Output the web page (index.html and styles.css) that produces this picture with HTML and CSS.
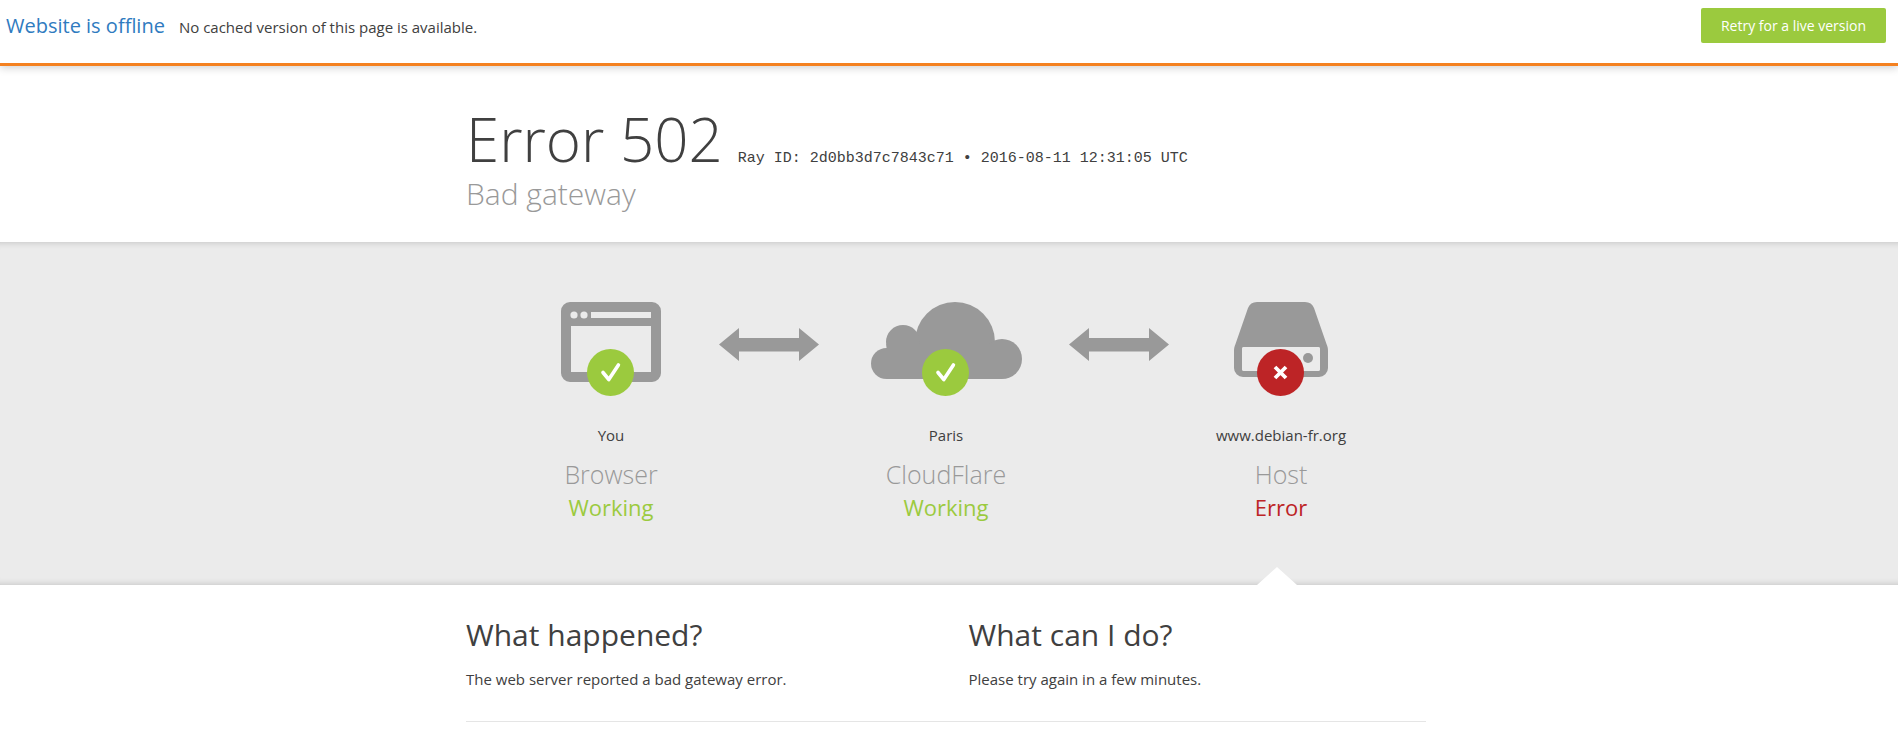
FILE: index.html
```html
<!DOCTYPE html>
<html>

<head>
  <meta charset="utf-8">
  <meta name="viewport" content="width=device-width">
  <title>Error 502 - Bad gateway</title>
  <link rel="stylesheet" href="styles.css">
</head>

<body>
  <div class="offline-bar">
    <span class="offline-title">Website is offline</span>
    <span class="offline-text">No cached version of this page is available.</span>
    <a class="retry-btn">Retry for a live version</a>
  </div>

  <div class="wrapper error-header">
    <h1><span class="error-code">Error 502</span><small class="ray-id">Ray ID: 2d0bb3d7c7843c71 &bull; 2016-08-11 12:31:05 UTC</small></h1>
    <h2 class="error-type">Bad gateway</h2>
  </div>

  <div class="diagram">
    <div class="diagram-row">
      <div class="node">
        <div class="node-icon">
          <svg class="device" width="100" height="80" viewBox="0 0 100 80">
            <path fill="#999" fill-rule="evenodd" d="M9 0h82a9 9 0 0 1 9 9v62a9 9 0 0 1-9 9H9a9 9 0 0 1-9-9V9a9 9 0 0 1 9-9zM10 24v46h80V24zM30 10v6h60v-6z" />
            <circle cx="13" cy="13" r="3.6" fill="#ebebeb" />
            <circle cx="23" cy="13" r="3.6" fill="#ebebeb" />
          </svg>
          <svg class="badge" width="47" height="47" viewBox="0 0 47 47">
            <circle cx="23.5" cy="23.5" r="23.5" fill="#9bca3e" />
            <path fill="none" stroke="#fff" stroke-width="3.6" stroke-linecap="round" stroke-linejoin="round" d="M16 23.5l5.8 7 9.6-14.5" />
          </svg>
          <svg class="arrow" width="100" height="33" viewBox="0 0 100 33">
            <path fill="#999" d="M0 16.5L20 0v10h60V0l20 16.5L80 33V23.500H20V33z" />
          </svg>
        </div>
        <span class="node-where">You</span>
        <span class="node-name">Browser</span>
        <span class="node-status ok">Working</span>
      </div>

      <div class="node">
        <div class="node-icon">
          <svg class="device cloud" width="151" height="77" viewBox="0 0 151 77">
            <g fill="#999">
              <circle cx="84" cy="40" r="40" />
              <circle cx="131" cy="57" r="20" />
              <circle cx="32" cy="40" r="17" />
              <circle cx="15.500" cy="61.500" r="15.500" />
              <rect x="15.500" y="42" width="115.500" height="35" />
            </g>
          </svg>
          <svg class="badge" width="47" height="47" viewBox="0 0 47 47">
            <circle cx="23.5" cy="23.5" r="23.5" fill="#9bca3e" />
            <path fill="none" stroke="#fff" stroke-width="3.6" stroke-linecap="round" stroke-linejoin="round" d="M16 23.5l5.8 7 9.6-14.5" />
          </svg>
          <svg class="arrow arrow-host" width="100" height="33" viewBox="0 0 100 33">
            <path fill="#999" d="M0 16.5L20 0v10h60V0l20 16.5L80 33V23.500H20V33z" />
          </svg>
        </div>
        <span class="node-where">Paris</span>
        <span class="node-name">CloudFlare</span>
        <span class="node-status ok">Working</span>
      </div>

      <div class="node">
        <div class="node-icon">
          <svg class="device" width="94" height="75" viewBox="0 0 94 75">
            <path fill="#999" fill-rule="evenodd" d="M23 0h48c4.500 0 7.500 2 9 6l12.500 36c1 2.500 1.500 4 1.500 7v17a9 9 0 0 1-9 9H9a9 9 0 0 1-9-9V49c0-3 .5-4.500 1.500-7L14 6c1.500-4 4.500-6 9-6zM10 45a2 2 0 0 0-2 2v20a2 2 0 0 0 2 2h74a2 2 0 0 0 2-2V47a2 2 0 0 0-2-2z" />
            <path fill="#ebebeb" d="M10 45h74a2 2 0 0 1 2 2v20a2 2 0 0 1-2 2H10a2 2 0 0 1-2-2V47a2 2 0 0 1 2-2z" />
            <circle cx="74" cy="56" r="5" fill="#999" />
          </svg>
          <svg class="badge badge-host" width="47" height="47" viewBox="0 0 47 47">
            <circle cx="23.5" cy="23.5" r="23.5" fill="#bd2426" />
            <path fill="none" stroke="#fff" stroke-width="3.800" d="M18 18l11 11M29 18L18 29" />
          </svg>
        </div>
        <span class="node-where">www.debian-fr.org</span>
        <span class="node-name">Host</span>
        <span class="node-status bad">Error</span>
      </div>
    </div>
    <div class="pointer"></div>
  </div>

  <div class="wrapper details">
    <div class="detail-col">
      <h2>What happened?</h2>
      <p>The web server reported a bad gateway error.</p>
    </div>
    <div class="detail-col">
      <h2>What can I do?</h2>
      <p>Please try again in a few minutes.</p>
    </div>
  </div>
  <div class="wrapper">
    <div class="rule"></div>
  </div>
</body>

</html>
```

FILE: styles.css
```css
/* Reset default styles */
body,
h1,
h2,
p {
  margin: 0;
  padding: 0;
}

html,
body {
  height: 735px;
  overflow: hidden;
}

body {
  background-color: #ffffff;
  color: #404040;
  font-family: "Open Sans", sans-serif;
}

.wrapper {
  width: 960px;
  margin-left: 466px;
}

/* Top bar */
.offline-bar {
  display: flex;
  align-items: center;
  height: 51px;
  padding: 0 12px 12px 6px;
  border-bottom: 3px solid #f48120;
  box-shadow: 0 2px 8px rgba(0, 0, 0, 0.18);
  position: relative;
}

.offline-title {
  font-size: 20px;
  color: #2f7bbf;
  margin-right: 14px;
}

.offline-text {
  font-size: 15px;
  color: #404040;
  margin-top: 2px;
}

.retry-btn {
  margin-left: auto;
  width: 185px;
  height: 35px;
  line-height: 35px;
  text-align: center;
  font-size: 14px;
  color: #ffffff;
  background-color: #9bca3e;
  border-radius: 2px;
}

/* Error heading */
.error-header {
  height: 176px;
  padding-top: 55px;
  box-sizing: border-box;
}

.error-header h1 {
  font-size: 60px;
  font-weight: 300;
  line-height: 36px;
  white-space: nowrap;
}

.ray-id {
  font-family: "Liberation Mono", monospace;
  font-size: 15px;
  font-weight: 400;
  margin-left: 15px;
}

.error-type {
  margin-top: 1px;
  font-size: 30px;
  font-weight: 300;
  line-height: 32px;
  color: #999999;
}

/* Browser / CloudFlare / Host diagram */
.diagram {
  position: relative;
  height: 343px;
  background-color: #ebebeb;
  box-shadow: inset 0 7px 7px -7px rgba(0, 0, 0, 0.2), inset 0 -7px 7px -7px rgba(0, 0, 0, 0.2);
}

.diagram-row {
  display: grid;
  grid-template-columns: repeat(3, 335px);
  margin-left: 443.5px;
  padding-top: 60px;
}

.node {
  display: flex;
  flex-direction: column;
  align-items: center;
}

.node-icon {
  position: relative;
  width: 100%;
  height: 94px;
  display: flex;
  justify-content: center;
  align-items: flex-start;
}

.cloud {
  margin-left: 1px;
}

.badge {
  position: absolute;
  left: 143.5px;
  top: 47px;
}

.badge-host {
  left: 143px;
}

.arrow {
  position: absolute;
  left: 275.5px;
  top: 26px;
}

.arrow-host {
  left: 290.5px;
}

.node-where {
  margin-top: 29px;
  font-size: 15px;
  line-height: 20px;
}

.node-name {
  margin-top: 13px;
  font-size: 25px;
  font-weight: 300;
  line-height: 32px;
  color: #999999;
}

.node-status {
  margin-top: 1px;
  font-size: 22px;
  line-height: 32px;
}

.ok {
  color: #9bca3e;
}

.bad {
  color: #bd2426;
}

.pointer {
  position: absolute;
  left: 1257px;
  bottom: 0;
  width: 0;
  height: 0;
  border-left: 20px solid transparent;
  border-right: 20px solid transparent;
  border-bottom: 18px solid #ffffff;
}

/* What happened */
.details {
  display: grid;
  grid-template-columns: 457.5px 457.5px;
  column-gap: 45px;
  padding-top: 30px;
  height: 136px;
  box-sizing: border-box;
}

.detail-col h2 {
  font-size: 30px;
  font-weight: 400;
  line-height: 40px;
}

.detail-col p {
  margin-top: 13px;
  font-size: 15px;
  line-height: 22px;
}

.rule {
  height: 1px;
  background-color: #e5e5e5;
}
```
